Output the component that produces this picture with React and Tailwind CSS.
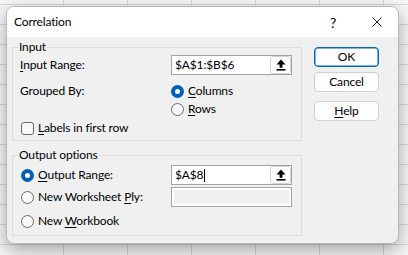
import React from "react";

const U = ({ children }) => (
  <span className="underline decoration-1 underline-offset-[2px]">{children}</span>
);

function Radio({ checked }) {
  return checked ? (
    <span className="flex h-[13px] w-[13px] shrink-0 items-center justify-center rounded-full bg-[#005fb8]">
      <span className="h-[5px] w-[5px] rounded-full bg-white" />
    </span>
  ) : (
    <span className="h-[13px] w-[13px] shrink-0 rounded-full border border-[#6b6b6b] bg-[#f8f8f8]" />
  );
}

function PickButton() {
  return (
    <span className="ml-auto flex h-[18px] w-[21px] shrink-0 items-center justify-center rounded-[3px] border border-[#d2d2d2] bg-white">
      <svg width="10" height="12" viewBox="0 0 10 12">
        <polygon points="5,0.5 0.5,5.5 9.5,5.5" fill="#000" />
        <rect x="3.6" y="5" width="2.8" height="3.8" fill="#000" />
        <rect x="0.5" y="10" width="9" height="1.6" fill="#000" />
      </svg>
    </span>
  );
}

function RangeBox({ value, cursor }) {
  return (
    <div className="flex h-[20px] w-[121px] shrink-0 items-center border border-[#a3a3a3] bg-white pl-[3px]">
      <span className="leading-none">{value}</span>
      {cursor && <span className="ml-[1px] h-[13px] w-[1px] bg-black" />}
      <PickButton />
    </div>
  );
}

function Group({ label, className, children }) {
  return (
    <div className={"relative w-[290px] border border-[#dcdcdc] " + className}>
      <span className="absolute left-[5px] top-[-8px] bg-[#f0f0f0] px-[1px] leading-[14px]">
        {label}
      </span>
      {children}
    </div>
  );
}

function Btn({ children, primary, className = "" }) {
  return (
    <div
      className={
        "flex h-[20px] w-[65px] items-center justify-center rounded-[4px] border bg-[#fdfdfd] " +
        (primary ? "border-[#0067c0] shadow-[inset_0_0_0_0.5px_#0067c0] " : "border-[#d0d0d0] ") +
        className
      }
    >
      {children}
    </div>
  );
}

export default function App() {
  return (
    <div className="h-[255px] w-[408px] overflow-hidden bg-[#f7f7f7] bg-[linear-gradient(to_right,#d6d6d6_1px,transparent_1px),linear-gradient(to_bottom,#d6d6d6_1px,transparent_1px)] pl-[6px] pt-[6px] font-['Lato',sans-serif] text-[12px] tracking-[-0.15px] text-black [background-position:63px_4px] [background-size:64px_20px]">
      <div className="flex h-[238px] w-[393px] flex-col overflow-hidden rounded-[8px] border border-[#b9b9b9] bg-[#f0f0f0] shadow-[0_6px_18px_rgba(0,0,0,0.34)]">
        <div className="flex h-[30px] shrink-0 items-center bg-white pl-[7px] pr-[16px]">
          <span>Correlation</span>
          <span className="ml-auto text-[14px]">?</span>
          <svg className="ml-[36px]" width="10" height="10" viewBox="0 0 10 10">
            <path d="M0.5 0.5 L9.5 9.5 M9.5 0.5 L0.5 9.5" stroke="#222" strokeWidth="1" />
          </svg>
        </div>
        <div className="flex pl-[5px] pt-[10px]">
          <div className="flex flex-col">
            <Group label="Input" className="h-[94px] pl-[7px] pt-[7px]">
              <div className="flex h-[20px] items-center">
                <span className="w-[151px]">
                  <U>I</U>nput Range:
                </span>
                <RangeBox value="$A$1:$B$6" />
              </div>
              <div className="mt-[7px] flex">
                <span className="flex h-[18px] w-[151px] items-center">Grouped By:</span>
                <div className="flex flex-col">
                  <div className="flex h-[18px] items-center gap-[4px]">
                    <Radio checked />
                    <span>
                      <U>C</U>olumns
                    </span>
                  </div>
                  <div className="flex h-[18px] items-center gap-[4px]">
                    <Radio />
                    <span>
                      <U>R</U>ows
                    </span>
                  </div>
                </div>
              </div>
              <div className="mt-[1px] flex h-[18px] items-center gap-[4px] pl-[1px]">
                <span className="h-[13px] w-[13px] rounded-[3px] border border-[#6b6b6b] bg-[#f8f8f8]" />
                <span>
                  <U>L</U>abels in first row
                </span>
              </div>
            </Group>
            <Group label="Output options" className="mt-[14px] h-[81px] pl-[8px] pt-[9px]">
              <div className="flex h-[20px] items-center">
                <div className="flex w-[150px] items-center gap-[4px]">
                  <Radio checked />
                  <span>
                    <U>O</U>utput Range:
                  </span>
                </div>
                <RangeBox value="$A$8" cursor />
              </div>
              <div className="mt-[2px] flex h-[20px] items-center">
                <div className="flex w-[150px] items-center gap-[4px]">
                  <Radio />
                  <span>
                    New Worksheet <U>P</U>ly:
                  </span>
                </div>
                <div className="h-[20px] w-[121px] border border-[#a3a3a3] bg-white p-[2px]">
                  <div className="h-full w-full bg-[#f0f0f0]" />
                </div>
              </div>
              <div className="mt-[4px] flex h-[20px] items-center gap-[4px]">
                <Radio />
                <span>
                  New <U>W</U>orkbook
                </span>
              </div>
            </Group>
          </div>
          <div className="ml-[12px] flex flex-col">
            <Btn primary>OK</Btn>
            <Btn className="mt-[5px]">Cancel</Btn>
            <Btn className="mt-[9px]">
              <span>
                <U>H</U>elp
              </span>
            </Btn>
          </div>
        </div>
      </div>
    </div>
  );
}
